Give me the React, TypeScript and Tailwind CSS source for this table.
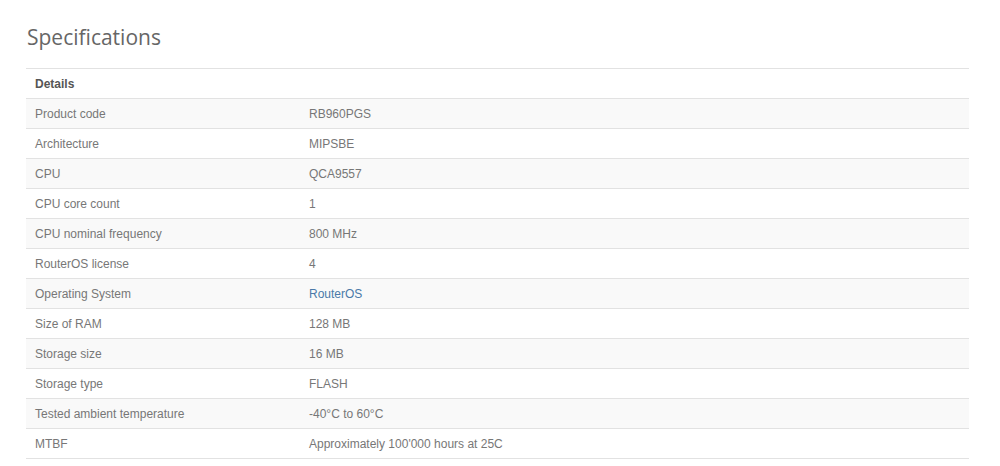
import React from "react";

const rows: [string, string, boolean?][] = [
  ["Product code", "RB960PGS"],
  ["Architecture", "MIPSBE"],
  ["CPU", "QCA9557"],
  ["CPU core count", "1"],
  ["CPU nominal frequency", "800 MHz"],
  ["RouterOS license", "4"],
  ["Operating System", "RouterOS", true],
  ["Size of RAM", "128 MB"],
  ["Storage size", "16 MB"],
  ["Storage type", "FLASH"],
  ["Tested ambient temperature", "-40°C to 60°C"],
  ["MTBF", "Approximately 100'000 hours at 25C"],
];

export default function App() {
  return (
    <div className="w-[1000px] h-[466px] bg-white overflow-hidden" style={{ fontFamily: '"Liberation Sans", Arial, sans-serif' }}>
      <div className="pl-[26px] pr-[31px] pt-[22px]">
        <h2
          className="text-[21px] leading-[30px] font-normal text-[#666] mb-[16px] pl-[1px]"
          style={{ fontFamily: '"Open Sans", sans-serif' }}
        >
          Specifications
        </h2>
        <table className="w-full border-collapse text-[12px] leading-[13px]">
          <thead>
            <tr className="border-t border-[#e2e2e2]">
              <th className="text-left font-bold text-[#555] h-[30px] px-[9px] pt-[1px] align-middle w-[283px]">Details</th>
              <th></th>
            </tr>
          </thead>
          <tbody>
            {rows.map(([k, v, link], i) => (
              <tr key={k} className={`border-t border-[#e2e2e2] ${i % 2 === 0 ? "bg-[#f9f9f9]" : "bg-white"} ${i === rows.length - 1 ? "border-b" : ""}`}>
                <td className="h-[30px] px-[9px] pt-[1px] align-middle text-[#777]">{k}</td>
                <td className={`h-[30px] px-0 pt-[1px] align-middle ${link ? "text-[#4a79a8]" : "text-[#777]"}`}>{v}</td>
              </tr>
            ))}
          </tbody>
        </table>
      </div>
    </div>
  );
}
